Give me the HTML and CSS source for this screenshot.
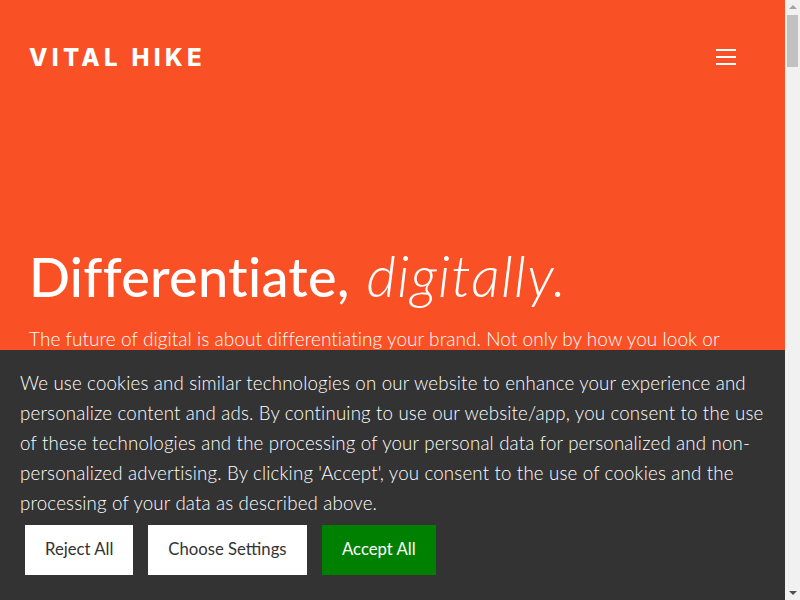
FILE: index.html
```html
<!DOCTYPE html>
<html lang="en">
<head>
  <meta charset="UTF-8">
  <title>Vital Hike</title>
  <link rel="stylesheet" href="styles.css">
</head>
<body>

  <div class="page">
    <header class="header">
      <div class="logo">VITAL HIKE</div>
      <div class="menu-btn">
        <span></span>
        <span></span>
        <span></span>
      </div>
    </header>

    <section class="hero">
      <h1>Differentiate, <em>digitally.</em></h1>
      <p>The future of digital is about differentiating your brand. Not only by how you look or</p>
    </section>
  </div>

  <div class="scrollbar">
    <div class="arrow-up"></div>
    <div class="thumb"></div>
    <div class="arrow-down"></div>
  </div>

  <div class="cookie-banner">
    <p>We use cookies and similar technologies on our website to enhance your experience and personalize content and ads. By continuing to use our website/app, you consent to the use of these technologies and the processing of your personal data for personalized and non-personalized advertising. By clicking 'Accept', you consent to the use of cookies and the processing of your data as described above.</p>
    <div class="cookie-buttons">
      <button class="btn">Reject All</button>
      <button class="btn">Choose Settings</button>
      <button class="btn btn-accept">Accept All</button>
    </div>
  </div>

</body>
</html>
```

FILE: styles.css
```css
* {
  margin: 0;
  padding: 0;
  box-sizing: border-box;
}

html, body {
  height: 100%;
  overflow: hidden;
  font-family: 'Lato', 'Open Sans', sans-serif;
  font-variant-ligatures: none;
}

body {
  display: flex;
  position: relative;
  background: #f1f1f1;
}

.page {
  flex: 1;
  background: #fa5025;
  color: #fff;
}

.header {
  display: flex;
  align-items: center;
  justify-content: space-between;
  padding: 42px 49px 0 29px;
}

.logo {
  font-family: 'Inter', 'Lato', sans-serif;
  font-size: 24px;
  line-height: 30px;
  font-weight: 800;
  letter-spacing: 4.3px;
  padding-top: 1px;
}

.menu-btn {
  display: flex;
  flex-direction: column;
  gap: 5px;
  width: 20px;
  margin-bottom: 1px;
}

.menu-btn span {
  height: 2px;
  background: #fff;
}

.hero {
  padding: 171px 29px 0;
}

h1 {
  font-size: 54px;
  line-height: 62px;
  font-weight: 500;
  letter-spacing: 0.3px;
  word-spacing: 3px;
}

h1 em {
  font-size: 57px;
  font-weight: 300;
  letter-spacing: 1.2px;
}

.hero p {
  margin-top: 16px;
  font-size: 19px;
  line-height: 30px;
  font-weight: 300;
  letter-spacing: 0.05px;
  white-space: nowrap;
}

.scrollbar {
  width: 15px;
  display: flex;
  flex-direction: column;
  align-items: center;
  background: #f1f1f1;
}

.arrow-up {
  margin-top: 5px;
  border-left: 4px solid transparent;
  border-right: 4px solid transparent;
  border-bottom: 4px solid #a3a3a3;
}

.thumb {
  width: 11px;
  height: 52px;
  margin-top: 6px;
  background: #c1c1c1;
}

.arrow-down {
  margin-top: auto;
  margin-bottom: 5px;
  border-left: 4px solid transparent;
  border-right: 4px solid transparent;
  border-top: 4px solid #505050;
}

.cookie-banner {
  position: absolute;
  left: 0;
  bottom: 0;
  width: 785px;
  height: 250px;
  padding: 18px 20px 0;
  background: #333;
  color: #fff;
}

.cookie-banner p {
  font-size: 18.7px;
  line-height: 30px;
  font-weight: 300;
  letter-spacing: 0.17px;
}

.cookie-buttons {
  display: flex;
  gap: 15px;
  margin: 7px 0 0 5px;
}

.btn {
  height: 50px;
  padding: 0 20px 3px;
  border: none;
  background: #fff;
  color: #333;
  font-family: inherit;
  font-size: 16.7px;
  font-weight: 400;
}

.btn-accept {
  padding: 0 20.5px 3px;
  background: #008000;
  color: #fff;
}
```
